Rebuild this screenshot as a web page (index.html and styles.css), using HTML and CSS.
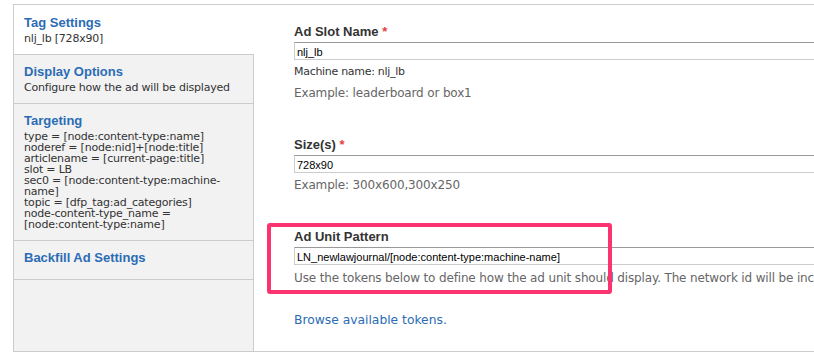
FILE: index.html
```html
<!DOCTYPE html>
<html lang="en">
<head>
<meta charset="utf-8">
<title>Tag Settings</title>
<link rel="stylesheet" href="styles.css">
</head>
<body>
<div class="vtabs">
  <ul class="tab-list">
    <li class="tab is-active">
      <a class="tab-title" href="#">Tag Settings</a>
      <div class="tab-summary">nlj_lb [728x90]</div>
    </li>
    <li class="tab">
      <a class="tab-title" href="#">Display Options</a>
      <div class="tab-summary">Configure how the ad will be displayed</div>
    </li>
    <li class="tab">
      <a class="tab-title" href="#">Targeting</a>
      <div class="tab-summary">type = [node:content-type:name]<br>noderef = [node:nid]+[node:title]<br>articlename = [current-page:title]<br>slot = LB<br>sec0 = [node:content-type:machine-name]<br>topic = [dfp_tag:ad_categories]<br>node-content-type_name = [node:content-type:name]</div>
    </li>
    <li class="tab tab--plain">
      <a class="tab-title" href="#">Backfill Ad Settings</a>
    </li>
  </ul>
  <div class="pane">
    <div class="field">
      <label class="field-label">Ad Slot Name <span class="req">*</span></label>
      <input class="text-input" type="text" value="nlj_lb">
      <div class="machine-name">Machine name: nlj_lb</div>
      <div class="description">Example: leaderboard or box1</div>
    </div>
    <div class="field">
      <label class="field-label">Size(s) <span class="req">*</span></label>
      <input class="text-input" type="text" value="728x90">
      <div class="description">Example: 300x600,300x250</div>
    </div>
    <div class="field field--last">
      <label class="field-label">Ad Unit Pattern</label>
      <input class="text-input" type="text" value="LN_newlawjournal/[node:content-type:machine-name]">
      <div class="description">Use the tokens below to define how the ad unit should display. The network id will be included automatically.</div>
      <div class="highlight"></div>
    </div>
    <a class="token-link" href="#">Browse available tokens.</a>
  </div>
</div>
</body>
</html>
```
FILE: styles.css
```css
html, body {
  margin: 0;
  padding: 0;
  background: #fff;
  overflow: hidden;
}

body {
  font-family: "DejaVu Sans", sans-serif;
  color: #333;
}

.vtabs {
  display: flex;
  margin: 4px 0 0 13px;
  width: 980px;
  min-height: 348px;
  box-sizing: border-box;
  border: 1px solid #ccc;
  border-right: 0;
}

.tab-list {
  flex: none;
  width: 240px;
  box-sizing: border-box;
  margin: 0;
  padding: 0;
  list-style: none;
  background: #f2f2f2;
  border-right: 1px solid #ccc;
}

.tab {
  padding: 9px 10px 10px;
  border-bottom: 1px solid #ccc;
}

.tab:first-child {
  padding-top: 10px;
}

.tab.is-active {
  background: #fff;
  margin-right: -1px;
}

.tab--plain {
  padding-bottom: 14px;
}

.tab-title {
  display: block;
  font: bold 13px/15px "Liberation Sans", Arial, sans-serif;
  color: #2b6cb5;
  text-decoration: none;
}

.tab-summary {
  margin-top: 3px;
  font: 11px/11px "DejaVu Sans", sans-serif;
  letter-spacing: -0.2px;
  color: #333;
}

.pane {
  flex: 1;
  min-width: 0;
  padding: 19px 0 0 40px;
}

.field {
  position: relative;
  margin-bottom: 36px;
}

.field--last {
  margin-bottom: 26px;
}

.field-label {
  display: block;
  margin-bottom: 2px;
  font: bold 13px/16px "Liberation Sans", Arial, sans-serif;
  color: #333;
}

.req {
  color: #e5403c;
}

.text-input {
  display: block;
  width: 640px;
  height: 18px;
  box-sizing: border-box;
  margin: 0;
  padding: 2px 2px 0;
  border: 1px solid #ccc;
  border-top-color: #999;
  border-radius: 0;
  font: 11px/14px "Liberation Sans", Arial, sans-serif;
  color: #000;
  background: #fff;
}

.machine-name {
  margin: 5px 0 6px;
  font: 11px/14px "DejaVu Sans", sans-serif;
  letter-spacing: -0.3px;
  color: #333;
}

.description {
  margin-top: 4px;
  font: 12px/16px "DejaVu Sans", sans-serif;
  letter-spacing: -0.15px;
  color: #666;
  white-space: nowrap;
}

.field--last .description {
  margin-top: 5px;
}

.highlight {
  position: absolute;
  left: -27px;
  top: -6px;
  width: 345px;
  height: 71px;
  box-sizing: border-box;
  border: 4px solid #fb3370;
  border-radius: 3px;
  pointer-events: none;
}

.token-link {
  display: block;
  font: 12.3px/16px "DejaVu Sans", sans-serif;
  color: #2b6cb5;
  text-decoration: none;
}
```
